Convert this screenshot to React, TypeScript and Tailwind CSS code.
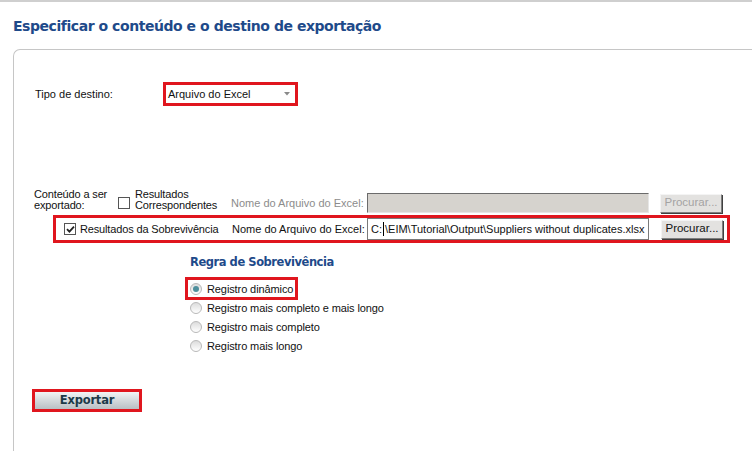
import React from "react";

function Radio({ checked }: { checked?: boolean }) {
  return (
    <span className="relative inline-flex h-[12px] w-[12px] shrink-0 items-center justify-center rounded-full border border-[#b9b9b9] bg-gradient-to-b from-[#dcdcdc] to-[#ffffff]">
      {checked && <span className="h-[6px] w-[6px] rounded-full bg-[#4e8f9c]" />}
    </span>
  );
}

function Checkbox({ checked }: { checked?: boolean }) {
  return (
    <span className="inline-flex h-[12px] w-[12px] shrink-0 items-center justify-center border border-[#555] bg-white">
      {checked && (
        <svg width="9" height="9" viewBox="0 0 9 9">
          <path d="M1 4.2 L3.4 6.6 L8 1.6" stroke="#222" strokeWidth="1.8" fill="none" />
        </svg>
      )}
    </span>
  );
}

function Btn({ disabled }: { disabled?: boolean }) {
  return (
    <div
      className={
        "flex h-[19px] w-[62px] items-center justify-center whitespace-nowrap border border-t-[#f4f4f4] border-l-[#f4f4f4] border-r-[#7f7f7f] border-b-[#7f7f7f] bg-[#e3e2e0] text-[11.5px] leading-none shadow-[1px_1px_0_#404040] " +
        (disabled ? "text-[#a3a3a3]" : "text-[#111]")
      }
    >
      Procurar...
    </div>
  );
}

export default function App() {
  return (
    <div className="h-[451px] w-[752px] overflow-hidden whitespace-nowrap border-t-2 border-[#cfcfcf] bg-white font-['Liberation_Sans',Arial,sans-serif] text-[11px] text-[#111]">
      <h1 className="pl-[13px] pt-[15px] font-['DejaVu_Sans',Verdana,sans-serif] text-[14px] font-bold leading-[18px] tracking-[-0.45px] text-[#1e4a8a]">
        Especificar o conteúdo e o destino de exportação
      </h1>
      <div className="ml-[13px] mt-[14px] h-[420px] rounded-tl-[7px] border-l border-t border-[#c6c6c6]">
        {/* Tipo de destino */}
        <div className="ml-[21px] mt-[32px] flex h-[24px] items-center">
          <span className="w-[128px] shrink-0 text-[11px]">Tipo de destino:</span>
          <div className="flex h-[24px] w-[135px] shrink-0 items-center justify-between border-[3px] border-[#e0161e] bg-white pl-[2px] pr-[5px] text-[11px]">
            <span>Arquivo do Excel</span>
            <svg width="6" height="4" viewBox="0 0 6 4">
              <path d="M0 0 L6 0 L3 3.5 Z" fill="#8a8a8a" />
            </svg>
          </div>
        </div>

        {/* Conteúdo a ser exportado */}
        <div className="ml-[20px] mt-[83px] flex items-end">
          <div className="w-[84px] shrink-0 text-[11px] leading-[11px] tracking-[-0.15px]">
            Conteúdo a ser
            <br />
            exportado:
          </div>
          <div className="mb-[-2px] shrink-0">
            <Checkbox />
          </div>
          <div className="ml-[5px] w-[96px] shrink-0 text-[11px] leading-[11px] tracking-[-0.15px]">
            Resultados
            <br />
            Correspondentes
          </div>
          <div className="mb-[-2px] flex items-center">
            <span className="w-[136px] shrink-0 text-[11px] text-[#8c8c8c]">Nome do Arquivo do Excel:</span>
            <div className="h-[20px] w-[282px] shrink-0 border border-t-[#6b6b6b] border-l-[#6b6b6b] border-r-[#e6e6e6] border-b-[#e6e6e6] bg-[#d6d3ce]" />
            <div className="ml-[11px] shrink-0">
              <Btn disabled />
            </div>
          </div>
        </div>

        {/* Resultados da Sobrevivência */}
        <div className="ml-[39px] mt-[4px] flex h-[28px] w-[677px] items-center border-[3px] border-[#e0161e] pl-[8px]">
          <Checkbox checked />
          <span className="ml-[4px] w-[152px] shrink-0 text-[11px] tracking-[-0.15px]">Resultados da Sobrevivência</span>
          <span className="w-[135px] shrink-0 text-[11px]">Nome do Arquivo do Excel:</span>
          <div className="flex h-[22px] w-[282px] shrink-0 items-center overflow-hidden border border-[#7a7a7a] bg-white pl-[3px] text-[11px]">
            C:<span className="mx-[1px] inline-block h-[14px] w-[1px] bg-black" />\EIM\Tutorial\Output\Suppliers without duplicates.xlsx
          </div>
          <div className="ml-[12px] shrink-0">
            <Btn />
          </div>
        </div>

        {/* Regra de Sobrevivência */}
        <div className="ml-[176px] mt-[11px]">
          <div className="font-['DejaVu_Sans',Verdana,sans-serif] text-[11.5px] font-bold tracking-[-0.45px] text-[#1e4a8a]">
            Regra de Sobrevivência
          </div>
          <div className="mt-[8px] flex flex-col">
            <div className="-my-[2px] -ml-[5px] flex h-[23px] w-[113px] items-center gap-[5px] border-[3px] border-[#e0161e] pl-[2px]">
              <Radio checked />
              <span className="text-[11px] tracking-[-0.1px]">Registro dinâmico</span>
            </div>
            <div className="flex h-[19px] items-center gap-[5px]">
              <Radio />
              <span className="text-[11px] tracking-[-0.1px]">Registro mais completo e mais longo</span>
            </div>
            <div className="flex h-[19px] items-center gap-[5px]">
              <Radio />
              <span className="text-[11px] tracking-[-0.1px]">Registro mais completo</span>
            </div>
            <div className="flex h-[19px] items-center gap-[5px]">
              <Radio />
              <span className="text-[11px] tracking-[-0.1px]">Registro mais longo</span>
            </div>
          </div>
        </div>

        {/* Exportar */}
        <div className="ml-[18px] mt-[34px] h-[23px] w-[110px] border-[3px] border-[#e0161e]">
          <div className="flex h-full w-full items-center justify-center bg-gradient-to-b from-[#f2f4f5] via-[#d4d9dc] to-[#b9c0c4] font-['DejaVu_Sans',Verdana,sans-serif] text-[11.5px] font-bold tracking-[-0.2px] text-[#1c3a48]">
            Exportar
          </div>
        </div>
      </div>
    </div>
  );
}
